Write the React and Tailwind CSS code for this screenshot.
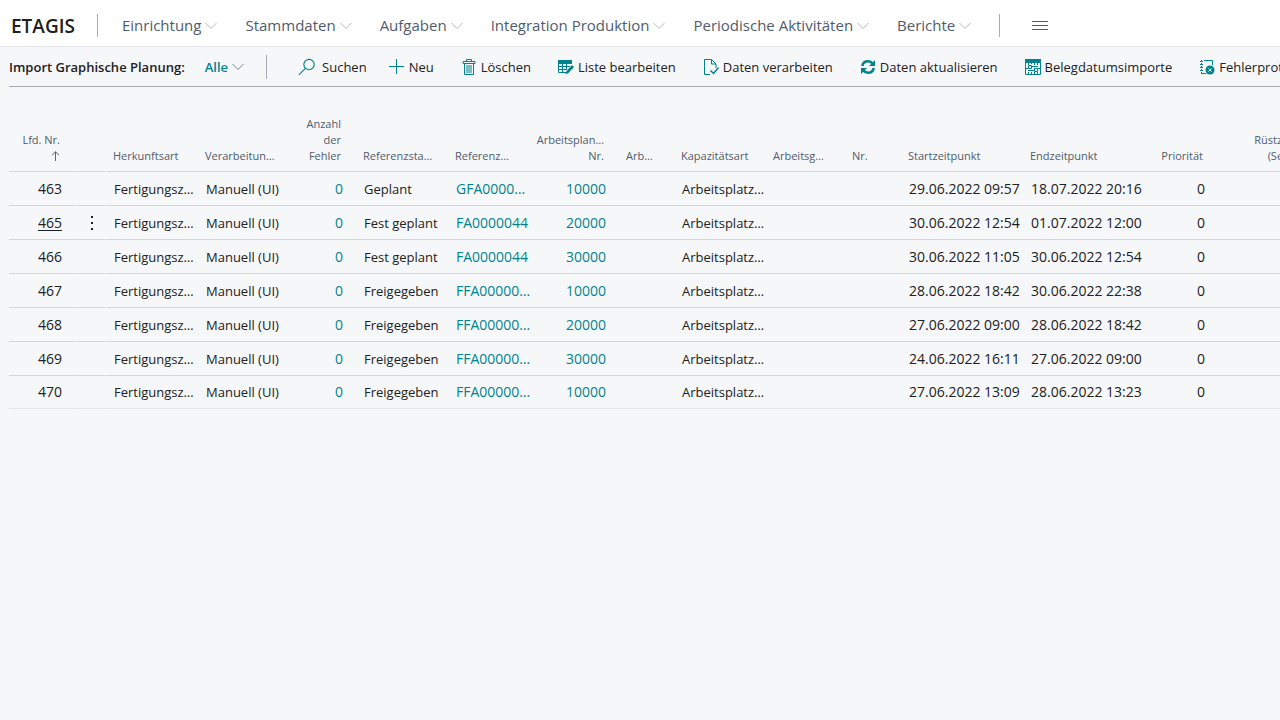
import { useState } from 'react';

const MENU = [
  'Einrichtung',
  'Stammdaten',
  'Aufgaben',
  'Integration Produktion',
  'Periodische Aktivitäten',
  'Berichte',
];

const COLUMNS = [
  { key: 'nr', label: 'Lfd. Nr.', width: 'w-[67px]', right: true, number: true, sorted: true },
  { key: 'menu', label: '', width: 'w-[31px]' },
  { key: 'origin', label: 'Herkunftsart', width: 'w-[92px]' },
  { key: 'processing', label: 'Verarbeitun…', width: 'w-[92px]' },
  { key: 'errors', label: 'Anzahl\nder\nFehler', width: 'w-[66px]', right: true, link: true, number: true },
  { key: 'status', label: 'Referenzsta…', width: 'w-[92px]' },
  { key: 'ref', label: 'Referenz…', width: 'w-[80px]', link: true, number: true },
  { key: 'plan', label: 'Arbeitsplan…\nNr.', width: 'w-[91px]', right: true, link: true, number: true },
  { key: 'arb', label: 'Arb…', width: 'w-[55px]' },
  { key: 'capacity', label: 'Kapazitätsart', width: 'w-[92px]' },
  { key: 'group', label: 'Arbeitsg…', width: 'w-[79px]' },
  { key: 'no', label: 'Nr.', width: 'w-[56px]' },
  { key: 'start', label: 'Startzeitpunkt', width: 'w-[122px]', number: true },
  { key: 'end', label: 'Endzeitpunkt', width: 'w-[122px]', number: true },
  { key: 'priority', label: 'Priorität', width: 'w-[73px]', right: true, number: true },
  { key: 'setup', label: 'Rüstzeit\n(Sek.)', width: 'w-[92px]', right: true, number: true },
  { key: 'rest', label: '', width: 'w-auto' },
];

const ROWS = [
  { nr: '463', status: 'Geplant', ref: 'GFA0000…', plan: '10000', start: '29.06.2022 09:57', end: '18.07.2022 20:16' },
  { nr: '465', status: 'Fest geplant', ref: 'FA0000044', plan: '20000', start: '30.06.2022 12:54', end: '01.07.2022 12:00' },
  { nr: '466', status: 'Fest geplant', ref: 'FA0000044', plan: '30000', start: '30.06.2022 11:05', end: '30.06.2022 12:54' },
  { nr: '467', status: 'Freigegeben', ref: 'FFA00000…', plan: '10000', start: '28.06.2022 18:42', end: '30.06.2022 22:38' },
  { nr: '468', status: 'Freigegeben', ref: 'FFA00000…', plan: '20000', start: '27.06.2022 09:00', end: '28.06.2022 18:42' },
  { nr: '469', status: 'Freigegeben', ref: 'FFA00000…', plan: '30000', start: '24.06.2022 16:11', end: '27.06.2022 09:00' },
  { nr: '470', status: 'Freigegeben', ref: 'FFA00000…', plan: '10000', start: '27.06.2022 13:09', end: '28.06.2022 13:23' },
].map((row) => ({
  origin: 'Fertigungsz…',
  processing: 'Manuell (UI)',
  errors: '0',
  capacity: 'Arbeitsplatz…',
  priority: '0',
  ...row,
}));

function Icon({ children, className = 'size-4' }) {
  return (
    <svg viewBox="0 0 16 16" fill="none" stroke="currentColor" className={`shrink-0 text-[#00838c] ${className}`} aria-hidden="true">
      {children}
    </svg>
  );
}

function Chevron({ className }) {
  return (
    <svg viewBox="0 0 12 8" fill="none" stroke="currentColor" className={`h-2 w-3 shrink-0 ${className}`} aria-hidden="true">
      <path d="M.5 1 6 6.5 11.500 1" />
    </svg>
  );
}

const SearchIcon = () => (
  <Icon className="size-[18px]">
    <circle cx="9.800" cy="5.800" r="4.600" />
    <path d="M6.500 9.200.8 15" />
  </Icon>
);

const PlusIcon = () => (
  <Icon>
    <path d="M7.500 0v15M0 7.500h15" />
  </Icon>
);

const TrashIcon = () => (
  <Icon>
    <path d="M2 2.500h12v2H2zM5.500 2V.5h5V2" />
    <path d="M3.500 4.500v11h9v-11" />
    <path d="M6 6v8M8 6v8M10 6v8" />
  </Icon>
);

const EditListIcon = () => (
  <Icon>
    <path d="M0 1h14v4H0z" fill="currentColor" stroke="none" />
    <path d="M.5 4v9.500H8M.5 7.500H12M.5 10.500H9M4.500 4v9.500M8.500 4v6" />
    <path d="m7.500 15.500 1-3.500 5.500-6 2 2-5.500 6z" fill="currentColor" stroke="none" />
  </Icon>
);

const ProcessIcon = () => (
  <Icon>
    <path d="M7 15.500H1.500V.5h7l4.500 4.500v4M8.500.5v4.500H13" />
    <path d="m7.500 11.500 3 3 5-6" strokeWidth="1.500" />
  </Icon>
);

const RefreshIcon = () => (
  <Icon>
    <path d="M2.300 7C2.800 3.800 5 2.300 8 2.300c2 0 3.500.8 4.500 2.200M13.700 9c-.5 3.200-2.700 4.700-5.700 4.700-2 0-3.500-.8-4.500-2.200" strokeWidth="2.600" />
    <path d="M15 1v6H9zM1 15V9h6z" fill="currentColor" stroke="none" />
  </Icon>
);

const ImportsIcon = () => (
  <Icon>
    <path d="M0 0h16v4H0z" fill="currentColor" stroke="none" />
    <path d="M.5 4v11.500h15V4M3.500 4v2M6.500 4v1M9.500 4v2M12.500 4v2" />
    <path d="M3.500 6.500h3v3h-3zM9.500 9.500h3v3h-3zM7 7.500h6M3 11.500h6M1 9.500h2M13 9.500h2" />
    <path d="M3.500 13v2M6.500 13v2M9.500 13v2M12.500 13v2" />
  </Icon>
);

const LogIcon = () => (
  <Icon>
    <path d="M5 1.500h8.500V6M7 14.500H3" />
    <path d="M2.500 1v14" strokeDasharray="2 1" />
    <path d="M1 2.500h3M1 5.500h3M1 8.500h3M1 11.500h3" />
    <circle cx="11" cy="11" r="4.500" fill="currentColor" stroke="none" />
    <path d="m9.500 9.500 3 3m0-3-3 3" className="stroke-white" />
  </Icon>
);

function SortArrow() {
  return (
    <svg viewBox="0 0 8 10" fill="none" stroke="#5b6475" className="ml-auto mr-px h-4 w-2 py-[3px]" aria-hidden="true">
      <path d="M4.500 10V.8M1 4.200 4.500.8 8 4.200" />
    </svg>
  );
}

function Action({ icon, label, gap = 'gap-1' }) {
  return (
    <button type="button" className={`flex shrink-0 items-center whitespace-nowrap ${gap}`}>
      {icon}
      {label}
    </button>
  );
}

function Cell({ column, row, active, onSelect }) {
  const value = row[column.key];
  if (column.key === 'menu') {
    return (
      <td className="border-x border-b border-x-[#f6f7f9] border-b-[#d2d6da] p-0 group-last:border-b-[#e2e5e8]">
        {active && (
          <button type="button" aria-label="Weitere Optionen" className="flex h-5 w-full items-center justify-center">
            <svg viewBox="0 0 2 14" className="h-[14px] w-[2px]" fill="#212121" aria-hidden="true">
              <path d="M0 0h2v2H0zM0 6h2v2H0zM0 12h2v2H0z" />
            </svg>
          </button>
        )}
      </td>
    );
  }
  return (
    <td
      className={`border-b border-[#d2d6da] py-0 pl-[7px] pr-[14px] group-last:border-[#e2e5e8] ${
        column.right ? 'text-right' : 'text-left'
      } ${column.number ? 'text-sm' : ''}`}
    >
      {column.key === 'nr' && (
        <button type="button" onClick={onSelect} className={active ? 'underline underline-offset-2' : ''}>
          {value}
        </button>
      )}
      {column.link && (
        <a href="#" className="text-[#00838c]">
          {value}
        </a>
      )}
      {column.key !== 'nr' && !column.link && value}
    </td>
  );
}

export default function App() {
  const [selected, setSelected] = useState('465');

  return (
    <div className="min-h-screen overflow-hidden bg-[#f6f7f9] font-['Open_Sans','Noto_Sans',sans-serif] text-[13px] leading-5 text-[#212121]">
      <header className="flex h-[47px] items-center border-b border-[#e5e7ea] bg-white pl-[11px] pt-[5px]">
        <h1 className="text-[19px] font-semibold">ETAGIS</h1>
        <nav className="ml-[22px] flex items-center gap-7 border-x border-[#a6adb8] pl-6 pr-7 text-[15px] leading-[23px] text-[#505c6d]">
          {MENU.map((item) => (
            <button key={item} type="button" className="flex shrink-0 items-center gap-1 whitespace-nowrap">
              {item}
              <Chevron className="text-[#b0b6bf]" />
            </button>
          ))}
        </nav>
        <button type="button" aria-label="Menü" className="ml-8">
          <svg viewBox="0 0 16 10" className="h-[10px] w-4" stroke="#505c6d" aria-hidden="true">
            <path d="M0 .5h16M0 4.500h16M0 8.500h16" />
          </svg>
        </button>
      </header>

      <main className="pl-[9px]">
        <div className="flex h-10 items-center border-b border-[#a6adb8]">
          <h2 className="shrink-0 whitespace-nowrap font-semibold">Import Graphische Planung:</h2>
          <button type="button" className="ml-5 flex shrink-0 items-center gap-1 font-semibold text-[#00838c]">
            Alle
            <Chevron className="text-[#6d8a92]" />
          </button>
          <div className="ml-[22px] h-6 w-px shrink-0 bg-[#a6adb8]" />
          <div className="ml-[31px] flex items-center gap-[27px]">
            <div className="flex items-center gap-[22px]">
              <Action icon={<SearchIcon />} label="Suchen" gap="gap-[6px]" />
              <Action icon={<PlusIcon />} label="Neu" />
            </div>
            <Action icon={<TrashIcon />} label="Löschen" />
            <Action icon={<EditListIcon />} label="Liste bearbeiten" />
            <Action icon={<ProcessIcon />} label="Daten verarbeiten" />
            <Action icon={<RefreshIcon />} label="Daten aktualisieren" />
            <Action icon={<ImportsIcon />} label="Belegdatumsimporte" />
            <Action icon={<LogIcon />} label="Fehlerprotokoll" />
          </div>
        </div>

        <table className="w-full min-w-[1306px] table-fixed border-separate border-spacing-0 whitespace-nowrap">
          <colgroup>
            {COLUMNS.map((column) => (
              <col key={column.key} className={column.width} />
            ))}
          </colgroup>
          <thead className="text-[11px] leading-4 text-[#505c6d]">
            <tr className="h-[85px]">
              {COLUMNS.map((column) => (
                <th
                  key={column.key}
                  className={`whitespace-pre border-b border-[#d2d6da] pb-[7px] pl-[6px] pr-4 align-bottom font-normal ${
                    column.right ? 'text-right' : 'text-left'
                  } ${column.key === 'menu' ? 'border-x border-x-[#f6f7f9]' : ''}`}
                >
                  {column.label}
                  {column.sorted && <SortArrow />}
                </th>
              ))}
            </tr>
          </thead>
          <tbody>
            {ROWS.map((row) => (
              <tr key={row.nr} className="group h-[34px] last:h-[33px]">
                {COLUMNS.map((column) => (
                  <Cell
                    key={column.key}
                    column={column}
                    row={row}
                    active={row.nr === selected}
                    onSelect={() => setSelected(row.nr)}
                  />
                ))}
              </tr>
            ))}
          </tbody>
        </table>
      </main>
    </div>
  );
}
